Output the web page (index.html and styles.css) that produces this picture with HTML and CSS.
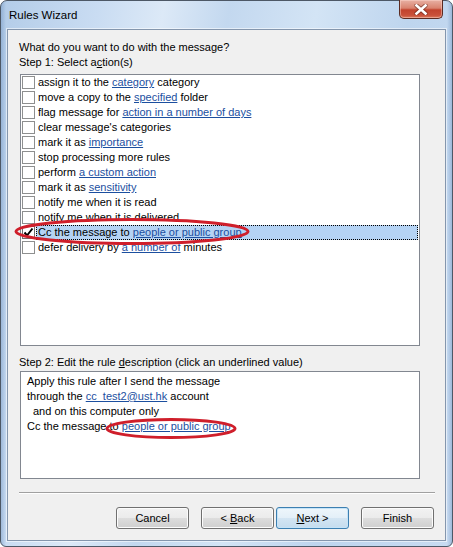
FILE: index.html
```html
<!DOCTYPE html>
<html>
<head>
<meta charset="utf-8">
<link rel="stylesheet" href="styles.css">
</head>
<body>
<div class="window">
  <div class="titlebar">
    <span class="title">Rules Wizard</span>
    <div class="close">
      <svg width="14" height="11" viewBox="0 0 14 11">
        <path d="M2.5 1.5 L11.5 9.5 M11.5 1.5 L2.5 9.5" stroke="#5a1f14" stroke-width="4.4" stroke-linecap="round" fill="none" opacity="0.55"/>
        <path d="M2.5 1.5 L11.5 9.5 M11.5 1.5 L2.5 9.5" stroke="#ffffff" stroke-width="2.6" stroke-linecap="square" fill="none"/>
      </svg>
    </div>
  </div>
  <div class="client">
    <div class="label">What do you want to do with the message?</div>
    <div class="label">Step 1: Select a<u>c</u>tion(s)</div>
    <div class="listbox">
      <div class="row"><span class="cb"></span><span class="txt">assign it to the <a>category</a> category</span></div>
      <div class="row"><span class="cb"></span><span class="txt">move a copy to the <a>specified</a> folder</span></div>
      <div class="row"><span class="cb"></span><span class="txt">flag message for <a>action in a number of days</a></span></div>
      <div class="row"><span class="cb"></span><span class="txt">clear message's categories</span></div>
      <div class="row"><span class="cb"></span><span class="txt">mark it as <a>importance</a></span></div>
      <div class="row"><span class="cb"></span><span class="txt">stop processing more rules</span></div>
      <div class="row"><span class="cb"></span><span class="txt">perform <a>a custom action</a></span></div>
      <div class="row"><span class="cb"></span><span class="txt">mark it as <a>sensitivity</a></span></div>
      <div class="row"><span class="cb"></span><span class="txt">notify me when it is read</span></div>
      <div class="row"><span class="cb"></span><span class="txt">notify me when it is delivered</span></div>
      <div class="row selected"><span class="cb checked"><svg width="11" height="11" viewBox="0 0 11 11"><path d="M1.5 5.5 L4 8.5 L9.5 1.5" stroke="#000" stroke-width="2" fill="none"/></svg></span><span class="txt">Cc the message to <a>people or public group</a></span></div>
      <div class="row"><span class="cb"></span><span class="txt">defer delivery by <a>a number of</a> minutes</span></div>
    </div>
    <div class="label step2">Step 2: Edit the rule <u>d</u>escription (click an underlined value)</div>
    <div class="descbox">
      <div class="line">Apply this rule after I send the message</div>
      <div class="line">through the <a>cc_test2@ust.hk</a> account</div>
      <div class="line indent">and on this computer only</div>
      <div class="line">Cc the message to <a>people or public group</a></div>
    </div>
    <div class="sep"></div>
    <div class="buttons">
      <button class="btn gap">Cancel</button>
      <button class="btn small">&lt; <u>B</u>ack</button>
      <button class="btn default gap"><u>N</u>ext &gt;</button>
      <button class="btn">Finish</button>
    </div>
  </div>
  <svg class="annot" width="453" height="547" viewBox="0 0 453 547">
    <ellipse cx="132" cy="231.5" rx="116" ry="12" fill="none" stroke="#cf1f2b" stroke-width="3"/>
    <ellipse cx="171" cy="428.5" rx="64" ry="9" fill="none" stroke="#cf1f2b" stroke-width="3"/>
  </svg>
</div>
</body>
</html>
```
FILE: styles.css
```css
html, body {
  margin: 0;
  padding: 0;
  background: #ffffff;
}
body {
  font-family: "Liberation Sans", Arial, sans-serif;
  font-size: 11px;
  color: #000;
}
.window {
  position: relative;
  width: 453px;
  height: 547px;
  box-sizing: border-box;
  border: 1px solid #4d5866;
  border-radius: 7px 7px 6px 6px;
  padding: 0 6px 5px 6px;
  display: flex;
  flex-direction: column;
  background:
    linear-gradient(to right, rgba(110,145,190,0.45) 0, rgba(120,150,190,0.0) 5px, rgba(0,0,0,0) 446px, rgba(110,145,190,0.45) 451px),
    linear-gradient(100deg, #b3cce8 0%, #c9dcf2 18%, #dce9f7 30%, #c3d8ef 42%, #d3e4f5 58%, #bed5ee 75%, #c8dbf1 100%);
}
.titlebar {
  height: 28px;
  flex: none;
  display: flex;
  align-items: flex-start;
  justify-content: space-between;
}
.title {
  margin-left: 2px;
  margin-top: 7px;
  font-size: 11.5px;
  line-height: 15px;
  color: #000;
}
.close {
  width: 44px;
  height: 19px;
  margin-top: -1px;
  margin-right: 3px;
  box-sizing: border-box;
  border: 1px solid #5b2b22;
  border-top: none;
  border-radius: 0 0 5px 5px;
  background: linear-gradient(to bottom, #e8b1a4 0%, #d9836f 45%, #c2432d 55%, #c9513a 85%, #dc7a5c 100%);
  box-shadow: inset 0 0 0 1px rgba(255,220,210,0.45);
  display: flex;
  align-items: center;
  justify-content: center;
}
.client {
  flex: 1;
  box-sizing: border-box;
  border: 1px solid #8496ad;
  background: #f0f0f0;
  padding: 10px 10px 0 11px;
  display: flex;
  flex-direction: column;
  box-shadow: 0 0 0 1px rgba(255,255,255,0.55);
}
.label {
  line-height: 15px;
  height: 15px;
  white-space: nowrap;
}
u { text-decoration: underline; }
a {
  color: #1c4f9f;
  text-decoration: underline;
}
.listbox {
  margin-top: 4px;
  margin-left: 1px;
  width: 400px;
  height: 272px;
  box-sizing: border-box;
  border: 1px solid #828790;
  background: #ffffff;
  display: flex;
  flex-direction: column;
}
.row {
  height: 15px;
  display: flex;
  align-items: flex-start;
  white-space: nowrap;
}
.cb {
  width: 13px;
  height: 13px;
  box-sizing: border-box;
  margin: 1px 0 0 1px;
  border: 1px solid #8e8f8f;
  background: #ffffff;
  flex: none;
  display: flex;
  align-items: center;
  justify-content: center;
}
.cb.checked {
  border-color: #6e6e6e;
}
.txt {
  margin-left: 1px;
  padding-left: 2px;
  height: 15px;
  line-height: 15px;
  box-sizing: border-box;
}
.selected .txt {
  flex: 1;
  margin-right: 1px;
  background: #b5d3f4;
  border: 1px dotted #000;
  padding-left: 1px;
  line-height: 13px;
}
.step2 {
  margin-top: 9px;
}
.descbox {
  margin-top: 1px;
  margin-left: 1px;
  width: 400px;
  height: 108px;
  box-sizing: border-box;
  border: 1px solid #828790;
  background: #ffffff;
  padding: 2px 6px;
}
.line {
  line-height: 15px;
  height: 15px;
  white-space: nowrap;
}
.indent {
  padding-left: 6px;
}
.sep {
  margin-top: 13px;
  height: 1px;
  background: #a0a0a0;
  box-shadow: 0 1px 0 #ffffff;
}
.buttons {
  margin-top: 14px;
  display: flex;
  justify-content: flex-end;
  padding-right: 1px;
}
.btn {
  width: 73px;
  height: 22px;
  box-sizing: border-box;
  border: 1px solid #707070;
  border-radius: 3px;
  background: linear-gradient(to bottom, #f2f2f2 0%, #ebebeb 50%, #dddddd 50%, #cfcfcf 100%);
  box-shadow: inset 0 0 0 1px #fcfcfc;
  font-family: "Liberation Sans", Arial, sans-serif;
  font-size: 11px;
  color: #000;
  padding: 0;
  margin: 0;
  line-height: 18px;
}
.btn.gap { margin-right: 12px; }
.btn.small { margin-right: 2px; }
.btn.default {
  border-color: #3c7fb1;
  background: linear-gradient(to bottom, #eef6fb 0%, #e3eff8 50%, #d3e5f3 50%, #c5dcee 100%);
  box-shadow: inset 0 0 0 1px #c5e3f7;
}
.annot {
  position: absolute;
  top: -1px;
  left: -1px;
  pointer-events: none;
}
```
